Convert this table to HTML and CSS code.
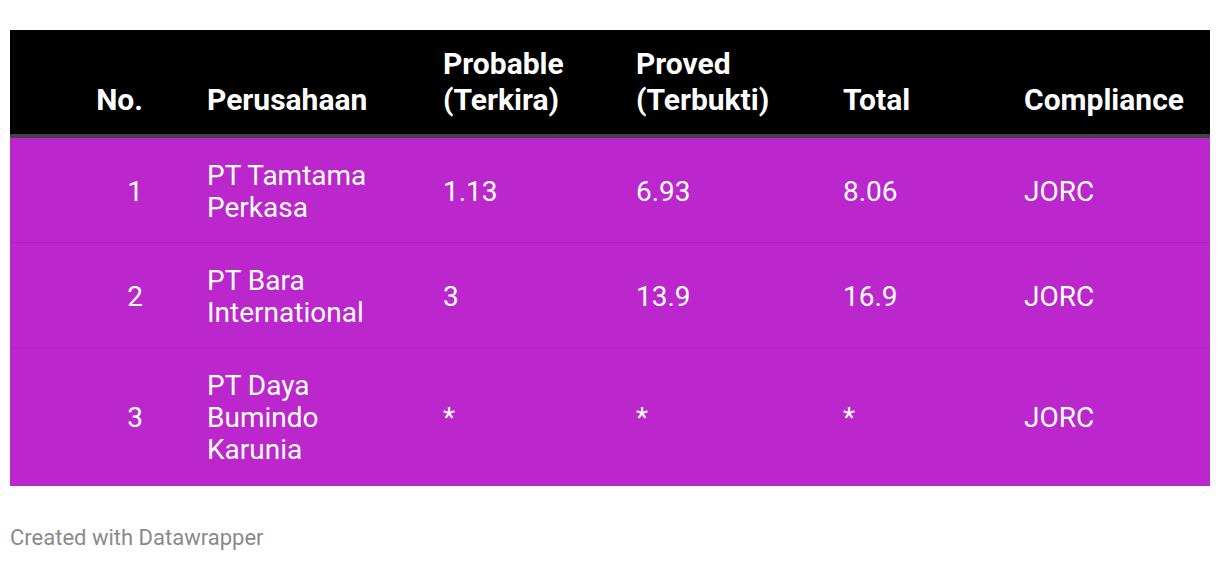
FILE: index.html
```html
<!DOCTYPE html>
<html>
<head>
<meta charset="utf-8">
<link rel="stylesheet" href="styles.css">
</head>
<body>
<div class="wrap">
  <table class="tbl">
    <colgroup>
      <col class="c1"><col class="c2"><col class="c3"><col class="c4"><col class="c5"><col class="c6">
    </colgroup>
    <thead>
      <tr>
        <th class="num">No.</th>
        <th>Perusahaan</th>
        <th>Probable<br>(Terkira)</th>
        <th>Proved<br>(Terbukti)</th>
        <th>Total</th>
        <th>Compliance</th>
      </tr>
    </thead>
    <tbody>
      <tr>
        <td class="num">1</td>
        <td>PT Tamtama<br>Perkasa</td>
        <td>1.13</td>
        <td>6.93</td>
        <td>8.06</td>
        <td>JORC</td>
      </tr>
      <tr>
        <td class="num">2</td>
        <td>PT Bara<br>International</td>
        <td>3</td>
        <td>13.9</td>
        <td>16.9</td>
        <td>JORC</td>
      </tr>
      <tr class="last">
        <td class="num">3</td>
        <td>PT Daya<br>Bumindo<br>Karunia</td>
        <td>*</td>
        <td>*</td>
        <td>*</td>
        <td>JORC</td>
      </tr>
    </tbody>
  </table>
  <div class="footer">Created with Datawrapper</div>
</div>
</body>
</html>
```

FILE: styles.css
```css
html, body {
  margin: 0;
  padding: 0;
  background: #ffffff;
}
.wrap {
  padding: 30px 10px 0 10px;
  font-family: Roboto, "Liberation Sans", sans-serif;
}
.tbl {
  width: 1200px;
  border-collapse: collapse;
  table-layout: fixed;
}
.c1 { width: 167px; }
.c2 { width: 236px; }
.c3 { width: 193px; }
.c4 { width: 207px; }
.c5 { width: 181px; }
.c6 { width: 216px; }
.tbl th {
  background: #000000;
  color: #ffffff;
  font-weight: 700;
  font-size: 30px;
  line-height: 36px;
  text-align: left;
  vertical-align: bottom;
  padding: 16px 0 16px 30px;
  border-bottom: 4px solid #444444;
}
.tbl td {
  background: #bb27cd;
  color: #ffffff;
  font-size: 28px;
  line-height: 32px;
  text-align: left;
  vertical-align: middle;
  padding: 22px 0 18px 30px;
  border-bottom: 1px solid #a822b8;
}
.tbl tr.last td {
  border-bottom: none;
  padding-bottom: 20px;
}
.tbl .num {
  text-align: right;
  padding-left: 0;
  padding-right: 34px;
}
.footer {
  margin-top: 39px;
  font-size: 22px;
  color: #8a8a8a;
  line-height: 26px;
}
```
